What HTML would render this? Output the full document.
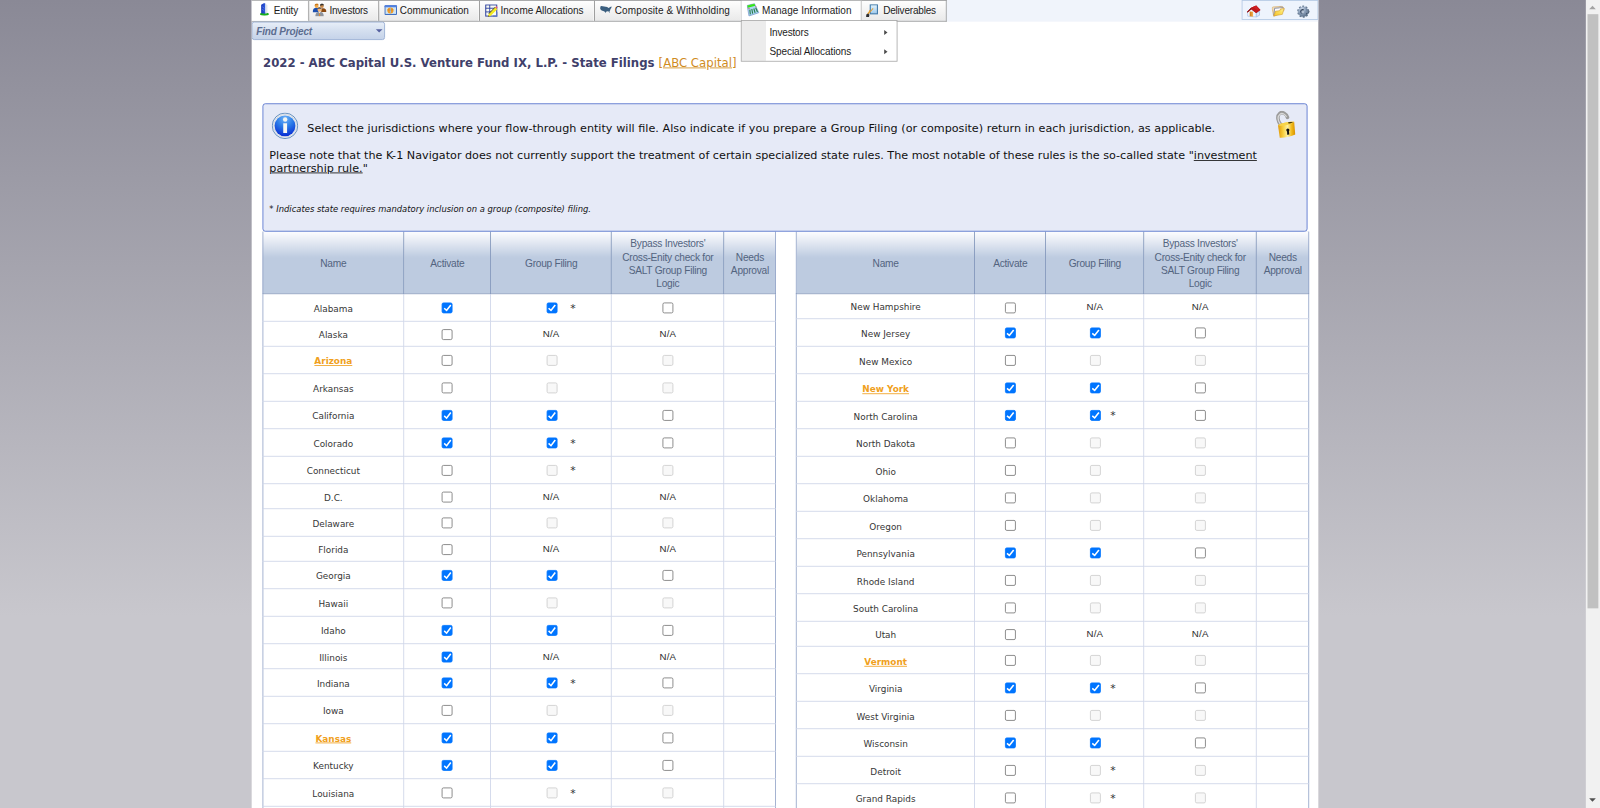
<!DOCTYPE html>
<html lang="en"><head><meta charset="utf-8"><title>State Filings</title>
<style>
html,body{margin:0;padding:0}
body{width:1600px;height:808px;overflow:hidden;position:relative;background:linear-gradient(#8a8996 0,#c8c7cd 616px,#c8c7cd 100%);font-family:"DejaVu Sans","Liberation Sans",sans-serif}
#scale{position:absolute;left:0;top:0;width:1920px;height:970px;transform:scale(.833333);transform-origin:0 0}
#page{position:absolute;left:302px;top:0;width:1280px;height:970px;background:#fff;overflow:hidden}
#strip{position:absolute;left:0;top:0;width:1280px;height:26px;background:#f0f4fb}
#menu{position:absolute;left:0;top:0;width:834px;height:26px;margin:0;padding:0;list-style:none;box-sizing:border-box;border:1px solid #9b9b9b;border-left:0;background:linear-gradient(#fefefe,#e9e9e9);font:12px "Liberation Sans",sans-serif;color:#1c1c1c}
#menu .mi{position:absolute;top:0;height:24px;box-sizing:border-box;border-right:1px solid #8e8e8e;box-shadow:inset -1px 0 0 #fafafa}
#menu .mi.first,#menu .mi.open{background:#fff}
#menu .mi.open,#menu .mi.preopen{border-right-color:#bcbcbc}
#menu .mi:last-child{border-right:0;box-shadow:none}
#menu .ico{position:absolute}
#menu .ico svg{display:block}
#menu .mt{position:absolute;top:0;line-height:24px;white-space:nowrap}
#sub{position:absolute;left:587.4px;top:24.3px;width:187.6px;height:49.4px;box-sizing:border-box;border:1px solid #a8a8a8;background:linear-gradient(90deg,#ececec 0,#ececec 29px,#fff 29px);margin:0;padding:1.7px 0 0;list-style:none;font:12px "Liberation Sans",sans-serif;color:#1c1c1c;z-index:5}
#sub li{position:relative;top:1px;height:23px;line-height:23px;padding-left:33px;white-space:nowrap}
#sub li i{position:absolute;right:11px;top:7.6px;width:0;height:0;border-left:4px solid #4a4a4a;border-top:3.8px solid transparent;border-bottom:3.8px solid transparent}
#tools{position:absolute;left:1187.5px;top:0;width:92.5px;height:23.6px;box-sizing:border-box;border:1px solid #b4c9e4;background:#eef4fd}
#tools span{position:absolute;top:4px}
#tools svg{display:block}
#find{position:absolute;left:0;top:26.3px;width:159.8px;height:21.3px;box-sizing:border-box;border:1px solid #8ea6cf;border-radius:3px;background:linear-gradient(#e7eef8,#d4dfef 50%,#c5d3e9);font:italic bold 12px "Liberation Sans",sans-serif;color:#5d6d90}
#find b{position:absolute;left:4.6px;top:2px;line-height:19px;letter-spacing:-.22px;white-space:nowrap}
#find i{position:absolute;left:147.6px;top:7.8px;width:0;height:0;border-top:4.6px solid #5560a0;border-left:4.2px solid transparent;border-right:4.2px solid transparent}
h1{position:absolute;left:13.6px;top:65.3px;margin:0;font:bold 14.06px "DejaVu Sans",sans-serif;color:#40406a;white-space:nowrap;line-height:20px}
h1 a{font-weight:normal;color:#d08c1e;text-decoration:underline}
#info{position:absolute;left:12.8px;top:123.6px;width:1254px;height:154.9px;z-index:2;box-sizing:border-box;border:1.3px solid #4f6ecb;border-radius:3.4px;background:#e6eaf7;font:13.42px "DejaVu Sans",sans-serif;color:#111}
#info .ic{position:absolute;left:10.4px;top:10.2px}
#info .lk{position:absolute;left:1214.4px;top:8.8px}
#info p{position:absolute;margin:0;white-space:nowrap;line-height:16px}
#info .p1{left:53px;top:21.8px;word-spacing:.19px}
#info .p2{left:7.4px;top:54px}
#info .p3{left:7.4px;top:69.6px}
#info .p4{left:7.4px;top:119.8px;font:italic 10.08px "DejaVu Sans",sans-serif;line-height:14px}
#info u{text-decoration:underline}
table.grid{position:absolute;top:278.1px;border-collapse:collapse;table-layout:fixed;font:10.67px "DejaVu Sans",sans-serif;color:#363636}
table.grid th{height:74px;padding:3.4px 0 0;box-sizing:border-box;border:1px solid #8095ba;border-top:0;background:linear-gradient(#fdfdff 0,#bdcbe0 42%,#bdcbe0 100%);font:normal 12.2px/16px "Liberation Sans",sans-serif;letter-spacing:-.3px;color:#53647f;text-align:center;vertical-align:middle}
table.grid td{padding:0;border:1px solid #cdd4e8;text-align:center;vertical-align:middle}
table.grid td:first-child,table.grid th:first-child{border-left-color:#93a4c8}
table.grid td:last-child,table.grid th:last-child{border-right-color:#93a4c8}
table.grid input{-webkit-appearance:none;appearance:none;display:inline-block;margin:0;width:13px;height:13px;box-sizing:border-box;border:1px solid #767676;border-radius:2.2px;background:#fff;vertical-align:middle;position:relative;top:.4px}
table.grid input:checked{background:#0075ff;border-color:#0075ff}
table.grid input:checked::after{content:"";position:absolute;left:-1px;top:-1px;width:13px;height:13px;background:#fff;clip-path:polygon(1.98px 7.62px,5.63px 10.77px,11.35px 3.49px,9.85px 2.31px,5.37px 8.03px,3.22px 6.18px)}
table.grid input:disabled{border-color:#cdcdcd;background:#f8f8f8}
table.grid .gw{position:relative;display:inline-block}
table.grid .gw input{left:.8px}
table.grid .star{position:absolute;left:29.5px;top:.8px;font-size:13px;line-height:13px;color:#333}
table.grid .na{font:11.6px "Liberation Sans",sans-serif;color:#2a2a2a;position:relative;top:.7px;letter-spacing:.25px}
table.grid td:first-child{padding-top:2px}
table.grid tr.sh td:first-child{padding-top:4px}
table.rt td:first-child{padding-top:5px}
table.rt tr.sh td:first-child{padding-top:4px}
table.rt tbody tr:first-child td:first-child{padding-top:2.4px}
table.rt .star{left:24.9px}
table.rt tbody tr:first-child input{top:1.6px}
a.sl{color:#f0a020;font-weight:bold;text-decoration:underline}
#sb{position:absolute;left:1903px;top:0;width:17px;height:970px;background:#f1f1f1}
#sb .th{position:absolute;left:1.6px;top:17px;width:13.4px;height:712.5px;background:#c1c1c1}
#sb .up{position:absolute;left:4px;top:6.5px;width:0;height:0;border-bottom:4px solid #a3a3a3;border-left:4px solid transparent;border-right:4px solid transparent}
#sb .dn{position:absolute;left:4px;bottom:7.7px;width:0;height:0;border-top:4px solid #505050;border-left:4px solid transparent;border-right:4px solid transparent}

</style></head>
<body>
<div id="scale">
<div id="page">
<div id="strip"></div>
<ul id="menu">
<li class="mi first" style="left:0.0px;width:68.7px"><span class="ico" style="left:9.0px;top:2.0px"><svg width="16" height="16" viewBox="0 0 16 16"><defs><linearGradient id="ge" x1="0" y1="0" x2="1" y2="0"><stop offset="0" stop-color="#1636b8"/><stop offset="1" stop-color="#2f5ce0"/></linearGradient></defs><ellipse cx="6.3" cy="13.9" rx="5.4" ry="1.9" fill="#19b01c"/><path d="M2.4 13V2.6L6 .6l1.5 1V13.4z" fill="url(#ge)"/><path d="M7.5 1.6L9.9 3v9.6l-2.4.8z" fill="#dde3ee"/><path d="M3.6 5l2.6 2M3.6 8l2.6 2" stroke="#6f8ff0" stroke-width=".7"/></svg></span><span class="mt" style="left:26.6px;letter-spacing:-0.167px">Entity</span></li>
<li class="mi" style="left:68.7px;width:83.9px"><span class="ico" style="left:4.8px;top:3.3px"><svg width="17" height="16" viewBox="0 0 17 16"><path d="M.2 10.6c0-3.4 1.6-5.2 4.6-5.2 1.600 0 2.500.8 2.500 2.200v3z" fill="#1c4fb0"/><path d="M16.700 10.400c0-3-1.400-4.400-3.800-4.400-1.500 0-2.500.8-2.500 2v2.400z" fill="#8a4a12"/><circle cx="4.900" cy="3.200" r="2.300" fill="#f0a848"/><path d="M2.600 3c0-1.900 1.100-2.800 2.400-2.800s2.300.8 2.300 2.200c-1.300-.5-3-.4-4.700.6z" fill="#c8781c"/><circle cx="11.300" cy="3.300" r="2.300" fill="#c88848"/><path d="M9 2.800C9 1 10.100.2 11.400.2s2.300.9 2.300 2.400c-1.500-.6-3.100-.5-4.700.2z" fill="#33302c"/><path d="M3.400 15.400c0-3.600 1.800-5.200 5.100-5.200s5 1.600 5 5.200z" fill="#8d949e"/><path d="M7.300 10.300h2.400L8.500 12z" fill="#f4f4f4"/><path d="M8.500 11l.9 3.800-.9.800-.9-.8z" fill="#e08830"/><circle cx="8.500" cy="7.600" r="2.500" fill="#f4b87c"/><path d="M6 7.200c0-1.800 1.100-2.500 2.500-2.500s2.500.8 2.500 2.500c-1.600-.8-3.400-.8-5 0z" fill="#5a5048"/></svg></span><span class="mt" style="left:24.8px;letter-spacing:-0.322px">Investors</span></li>
<li class="mi" style="left:152.6px;width:121.4px"><span class="ico" style="left:6.0px;top:4.8px"><svg width="16" height="13" viewBox="0 0 16 13"><rect x=".4" y=".4" width="15" height="11.600" rx="1.200" fill="#3f6fc0"/><rect x=".4" y=".4" width="15" height="2.600" rx="1.200" fill="#4f7fe0"/><rect x="1.600" y="2.700" width="12.600" height="8" fill="#cfe4f2"/><ellipse cx="7.500" cy="6.600" rx="3.700" ry="3.600" fill="#f09a28"/><path d="M7.500 3c-1 1.500-1 5.700 0 7.200 1-1.500 1-5.700 0-7.200z" fill="#8fc0e8"/><path d="M4 5.500c2 .8 5 .8 7 0" stroke="#c87818" stroke-width=".6" fill="none"/></svg></span><span class="mt" style="left:25.2px;letter-spacing:-0.038px">Communication</span></li>
<li class="mi" style="left:274.0px;width:138.0px"><span class="ico" style="left:5.8px;top:3.5px"><svg width="16" height="16" viewBox="0 0 16 16"><rect x=".9" y=".9" width="13.200" height="13.400" fill="#f8fbf4" stroke="#2c3f9e" stroke-width="1.200"/><path d="M.9 4.900h13.200M.9 9.300h9M5.700.9v13.400" stroke="#2c3f9e" stroke-width="1.100"/><path d="M9.600 14.300h4.500v-5" stroke="#5f78c8" stroke-width="1.400" fill="none"/><path d="M12.200 3.600l2.600 2.400-7.600 7.700-3.600 1.600 1-3.900z" fill="#f4ea20"/><path d="M12.200 3.600l-7.600 7.800" stroke="#4a4420" stroke-width="1.100"/><path d="M12.200 3.600l1-.9c.8-.6 2.400.9 1.700 1.700l-.9 1z" fill="#e86078"/><path d="M3.600 15.300l.5-1.900 1.300 1.200z" fill="#554a30"/></svg></span><span class="mt" style="left:24.7px;letter-spacing:-0.028px">Income Allocations</span></li>
<li class="mi preopen" style="left:412.0px;width:175.6px"><span class="ico" style="left:6.0px;top:6.2px"><svg width="15" height="10" viewBox="0 0 15 10"><path d="M.5.800L1.500.3l7.200 1.200L10 2.600l1.300-.5 1.600-1 1-.3-.3 1.700-1 1.300-.5 1.900-.8 1 .6 1.600h-.6l-.8-1.600-1.800-.3-1.300.6-.9 1.700-.8-1.700-1-.6-1.900-.4-1.700-.9L.2 3.100z" fill="#3b5f7f"/></svg></span><span class="mt" style="left:23.7px;letter-spacing:0.157px">Composite &amp; Withholding</span></li>
<li class="mi open" style="left:587.6px;width:144.4px"><span class="ico" style="left:6.0px;top:2.8px"><svg width="16" height="16" viewBox="0 0 16 16"><path d="M.6 2.600L9.300.3l5.300 10.900-11.800 4z" fill="#a9d8f0" stroke="#6f8fc8" stroke-width=".8"/><path d="M1 2.600L9.300.6l1 2.400-9 2.300z" fill="#2fe010"/><path d="M1 2.800L9.300.7l.5 1-8.700 2.200z" fill="#58f030" opacity=".6"/><path d="M3.800 7.500l.6 5.700M6.200 6.800l1 5.500M8.600 6.200l1.500 5.200M10.800 5.400l2.200 5" stroke="#2a7a48" stroke-width="1.300"/><path d="M2.200 6.200l1.200-.3" stroke="#e04848" stroke-width="1.300"/><path d="M10.600 4.200l.9-.3" stroke="#e04848" stroke-width="1.200"/></svg></span><span class="mt" style="left:24.9px;letter-spacing:0.033px">Manage Information</span></li>
<li class="mi" style="left:732.0px;width:102.0px"><span class="ico" style="left:5.4px;top:3.6px"><svg width="15" height="16" viewBox="0 0 15 16"><defs><linearGradient id="gd" x1="0" y1="0" x2="0" y2="1"><stop offset="0" stop-color="#e4f4fd"/><stop offset="1" stop-color="#9cc8ec"/></linearGradient></defs><rect x="5.300" y=".7" width="8.600" height="10.900" fill="url(#gd)" stroke="#3f78a8" stroke-width="1.300"/><path d="M9.200 5.500L4.600 10.600 3 12.400l-1.400-1.300 1.700-1.800 1-2.600 1 1.400L8.300 4.600z" fill="#e8a030"/><path d="M.5 12.300l2.200-1.200 1.600 1.500-.5 2.800H.4z" fill="#2c2c30"/></svg></span><span class="mt" style="left:25.8px;letter-spacing:-0.233px">Deliverables</span></li>
</ul>
<ul id="sub"><li style="letter-spacing:-.21px">Investors<i></i></li><li style="letter-spacing:-.11px">Special Allocations<i></i></li></ul>
<div id="tools"><span style="left:4.8px;top:4.6px"><svg width="19" height="16" viewBox="0 0 19 16"><defs><linearGradient id="gh" x1="0" y1="0" x2="1" y2="0"><stop offset="0" stop-color="#d07810"/><stop offset="1" stop-color="#f4b458"/></linearGradient></defs><path d="M12.400 9.600l4-2.100v4.800l-4 2.100z" fill="#dbe8fb" stroke="#8cb0e0" stroke-width=".7"/><path d="M2.200 8.600l4.300-3.500 5.900 4.500v4.800L2.200 13.400z" fill="#f2f6fe" stroke="#9cbce8" stroke-width=".7"/><path d="M4.650 7.750l4.050.25v6.200l-4.050-.6z" fill="url(#gh)"/><path d="M1.300 8.300L6.300 3.200 12.400.5l5.100 5.400-5.100 3.700L6.500 5.100 2.200 8.900z" fill="#b41418"/><path d="M6.300 3.200L12.400.5l5.100 5.400-5.100 3.700-5.900-4.500z" fill="#c0181c"/><path d="M1.300 8.300L6.300 3.200l.5 1.700-4.600 4z" fill="#8a1014"/><path d="M9 2.400l3.400-1.500 3.600 3.900-2 1.400z" fill="#d42428" opacity=".7"/></svg></span><span style="left:35px;top:6.2px"><svg width="17" height="14" viewBox="0 0 17 14"><defs><linearGradient id="gf" x1="0" y1="1" x2="1" y2="0"><stop offset="0" stop-color="#f4c028"/><stop offset=".6" stop-color="#fbe060"/><stop offset="1" stop-color="#fdf4a8"/></linearGradient></defs><path d="M.3 2.300l1.400-1 10.700-.8 2.700 2.400-.3 3L2.500 12.600z" fill="#f0dcb8" stroke="#d8a860" stroke-width=".7"/><path d="M9.500 1.400l4.500.5" stroke="#78809c" stroke-width="1"/><path d="M3.700 3.200l6.200-.5-.4 2.800-5.700 1z" fill="#fbfbfd"/><path d="M9.600 2.400l-6 .5-1.100 8.300" fill="none" stroke="#848ca8" stroke-width="1.100"/><path d="M4.650 6.400l4.850-.5L10.800 4l4-.8-1.900 7L2.500 12.200z" fill="url(#gf)" stroke="#c8901c" stroke-width=".6"/></svg></span><span style="left:65.6px;top:4.6px"><svg width="17" height="17" viewBox="0 0 17 17"><defs><radialGradient id="gg" cx=".36" cy=".26" r=".85"><stop offset="0" stop-color="#ccd8e8"/><stop offset=".45" stop-color="#8a9eb8"/><stop offset="1" stop-color="#52677f"/></radialGradient></defs><circle cx="7.900" cy="8" r="6.300" fill="none" stroke="#62778f" stroke-width="1.900" stroke-dasharray="2.300 1.660"/><circle cx="7.900" cy="8" r="6.200" fill="url(#gg)"/><path d="M14 7.300l1.700.6-1.500 1.300z" fill="#2c3c50"/><circle cx="12" cy="10.500" r=".8" fill="#3c4e66"/><circle cx="12.300" cy="5.800" r=".7" fill="#5a6e88"/><ellipse cx="6.500" cy="7.800" rx="2.300" ry="2.700" fill="#34465e"/><ellipse cx="7.300" cy="8.100" rx="1.700" ry="2.200" fill="#b4c2d4"/><path d="M6 5.600c1-.9 2-.9 2.700-.3-1 .1-1.800.7-2.300 1.600z" fill="#2c3c52"/></svg></span></div>
<div id="find"><b>Find Project</b><i></i></div>
<h1>2022 - ABC Capital U.S. Venture Fund IX, L.P. - State Filings <a href="#">[ABC Capital]</a></h1>
<div id="info">
<span class="ic"><svg width="32" height="32" viewBox="0 0 32 32"><defs><radialGradient id="gi" cx=".5" cy=".15" r=".9"><stop offset="0" stop-color="#6fb4f8"/><stop offset=".45" stop-color="#2a7ae8"/><stop offset="1" stop-color="#0424d0"/></radialGradient></defs><circle cx="16" cy="16" r="15.300" fill="#eceff4" stroke="#4f7fb4" stroke-width="1"/><circle cx="16" cy="16" r="13.600" fill="none" stroke="#c8d0dc" stroke-width=".8"/><circle cx="16" cy="16" r="12.500" fill="url(#gi)"/><circle cx="16.200" cy="8.400" r="2.600" fill="#f4f4f0"/><path d="M13.900 12.900h4.600v11.600h-4.600z" fill="#f8f8f4"/></svg></span>
<span class="lk"><svg width="25" height="33" viewBox="0 0 25 33"><defs><linearGradient id="gl" x1="0" y1="0" x2="1" y2="0"><stop offset="0" stop-color="#e09808"/><stop offset=".3" stop-color="#f8d040"/><stop offset=".55" stop-color="#fdf0a0"/><stop offset=".8" stop-color="#f0b818"/><stop offset="1" stop-color="#d89000"/></linearGradient></defs><path d="M7 17C3.600 12.800 1.800 6.400 5.600 3.200c3.200-2.700 8 .4 9.400 4.600" fill="none" stroke="#9c9c9c" stroke-width="4.300" stroke-linecap="round"/><path d="M6.200 15.600C3.400 11.400 2.800 6.600 6 4c2.400-2 5.800-.2 7.600 2.800" fill="none" stroke="#d8d8d8" stroke-width="1.500" stroke-linecap="round"/><path d="M3.600 17.400c4-2.600 12-4.400 19.400-4.200l1.300 15.200c-5 2.600-12 4-18.600 3.800z" fill="url(#gl)"/><path d="M3.600 17.400c4-2.600 12-4.400 19.400-4.200-2 2.400-10 4.800-16.600 4.800z" fill="#f8d448"/><path d="M15.600 13.700c2-.4 4.400-.5 6.200-.4-.8 1-3.400 1.800-5.600 2z" fill="#4a3804"/><circle cx="15.400" cy="23" r="1.900" fill="#101010"/><path d="M14.400 23h2.100l.7 5.400-2.600.4z" fill="#101010"/></svg></span>
<p class="p1">Select the jurisdictions where your flow-through entity will file. Also indicate if you prepare a Group Filing (or composite) return in each jurisdiction, as applicable.</p>
<p class="p2">Please note that the K-1 Navigator does not currently support the treatment of certain specialized state rules. The most notable of these rules is the so-called state "<u>investment</u></p>
<p class="p3"><u>partnership rule.</u>"</p>
<p class="p4">* Indicates state requires mandatory inclusion on a group (composite) filing.</p>
</div>
<table class="grid lt" style="left:12.6px;width:615.8px"><colgroup><col style="width:169.8px"><col style="width:104.0px"><col style="width:145.0px"><col style="width:135.0px"><col style="width:62.0px"></colgroup>
<thead><tr><th>Name</th><th>Activate</th><th>Group Filing</th><th>Bypass Investors'<br>Cross-Enity check for<br>SALT Group Filing<br>Logic</th><th>Needs<br>Approval</th></tr></thead><tbody>
<tr class="sh" style="height:33.50px"><td>Alabama</td><td><input type="checkbox" checked></td><td><span class="gw"><input type="checkbox" checked><span class="star">*</span></span></td><td><input type="checkbox"></td><td></td></tr>
<tr class="sh" style="height:30.00px"><td>Alaska</td><td><input type="checkbox"></td><td><span class="gw"><span class="na">N/A</span></span></td><td><span class="na">N/A</span></td><td></td></tr>
<tr style="height:33.00px"><td><a class="sl" href="#">Arizona</a></td><td><input type="checkbox"></td><td><span class="gw"><input type="checkbox" disabled></span></td><td><input type="checkbox" disabled></td><td></td></tr>
<tr style="height:33.00px"><td>Arkansas</td><td><input type="checkbox"></td><td><span class="gw"><input type="checkbox" disabled></span></td><td><input type="checkbox" disabled></td><td></td></tr>
<tr style="height:33.00px"><td>California</td><td><input type="checkbox" checked></td><td><span class="gw"><input type="checkbox" checked></span></td><td><input type="checkbox"></td><td></td></tr>
<tr style="height:33.00px"><td>Colorado</td><td><input type="checkbox" checked></td><td><span class="gw"><input type="checkbox" checked><span class="star">*</span></span></td><td><input type="checkbox"></td><td></td></tr>
<tr style="height:33.00px"><td>Connecticut</td><td><input type="checkbox"></td><td><span class="gw"><input type="checkbox" disabled><span class="star">*</span></span></td><td><input type="checkbox" disabled></td><td></td></tr>
<tr class="sh" style="height:30.00px"><td>D.C.</td><td><input type="checkbox"></td><td><span class="gw"><span class="na">N/A</span></span></td><td><span class="na">N/A</span></td><td></td></tr>
<tr style="height:33.00px"><td>Delaware</td><td><input type="checkbox"></td><td><span class="gw"><input type="checkbox" disabled></span></td><td><input type="checkbox" disabled></td><td></td></tr>
<tr class="sh" style="height:30.00px"><td>Florida</td><td><input type="checkbox"></td><td><span class="gw"><span class="na">N/A</span></span></td><td><span class="na">N/A</span></td><td></td></tr>
<tr style="height:33.00px"><td>Georgia</td><td><input type="checkbox" checked></td><td><span class="gw"><input type="checkbox" checked></span></td><td><input type="checkbox"></td><td></td></tr>
<tr style="height:33.00px"><td>Hawaii</td><td><input type="checkbox"></td><td><span class="gw"><input type="checkbox" disabled></span></td><td><input type="checkbox" disabled></td><td></td></tr>
<tr style="height:33.00px"><td>Idaho</td><td><input type="checkbox" checked></td><td><span class="gw"><input type="checkbox" checked></span></td><td><input type="checkbox"></td><td></td></tr>
<tr class="sh" style="height:30.00px"><td>Illinois</td><td><input type="checkbox" checked></td><td><span class="gw"><span class="na">N/A</span></span></td><td><span class="na">N/A</span></td><td></td></tr>
<tr style="height:33.00px"><td>Indiana</td><td><input type="checkbox" checked></td><td><span class="gw"><input type="checkbox" checked><span class="star">*</span></span></td><td><input type="checkbox"></td><td></td></tr>
<tr style="height:33.00px"><td>Iowa</td><td><input type="checkbox"></td><td><span class="gw"><input type="checkbox" disabled></span></td><td><input type="checkbox" disabled></td><td></td></tr>
<tr style="height:33.00px"><td><a class="sl" href="#">Kansas</a></td><td><input type="checkbox" checked></td><td><span class="gw"><input type="checkbox" checked></span></td><td><input type="checkbox"></td><td></td></tr>
<tr style="height:33.00px"><td>Kentucky</td><td><input type="checkbox" checked></td><td><span class="gw"><input type="checkbox" checked></span></td><td><input type="checkbox"></td><td></td></tr>
<tr style="height:33.00px"><td>Louisiana</td><td><input type="checkbox"></td><td><span class="gw"><input type="checkbox" disabled><span class="star">*</span></span></td><td><input type="checkbox" disabled></td><td></td></tr>
<tr style="height:33.00px"><td>Maine</td><td><input type="checkbox"></td><td><span class="gw"><input type="checkbox" disabled></span></td><td><input type="checkbox" disabled></td><td></td></tr>
</tbody></table>
<table class="grid rt" style="left:653.3px;width:615.0px"><colgroup><col style="width:214.0px"><col style="width:85.0px"><col style="width:118.0px"><col style="width:135.0px"><col style="width:63.0px"></colgroup>
<thead><tr><th>Name</th><th>Activate</th><th>Group Filing</th><th>Bypass Investors'<br>Cross-Enity check for<br>SALT Group Filing<br>Logic</th><th>Needs<br>Approval</th></tr></thead><tbody>
<tr class="sh" style="height:30.30px"><td>New Hampshire</td><td><input type="checkbox"></td><td><span class="gw"><span class="na">N/A</span></span></td><td><span class="na">N/A</span></td><td></td></tr>
<tr style="height:33.00px"><td>New Jersey</td><td><input type="checkbox" checked></td><td><span class="gw"><input type="checkbox" checked></span></td><td><input type="checkbox"></td><td></td></tr>
<tr style="height:33.00px"><td>New Mexico</td><td><input type="checkbox"></td><td><span class="gw"><input type="checkbox" disabled></span></td><td><input type="checkbox" disabled></td><td></td></tr>
<tr style="height:33.00px"><td><a class="sl" href="#">New York</a></td><td><input type="checkbox" checked></td><td><span class="gw"><input type="checkbox" checked></span></td><td><input type="checkbox"></td><td></td></tr>
<tr style="height:33.00px"><td>North Carolina</td><td><input type="checkbox" checked></td><td><span class="gw"><input type="checkbox" checked><span class="star">*</span></span></td><td><input type="checkbox"></td><td></td></tr>
<tr style="height:33.00px"><td>North Dakota</td><td><input type="checkbox"></td><td><span class="gw"><input type="checkbox" disabled></span></td><td><input type="checkbox" disabled></td><td></td></tr>
<tr style="height:33.00px"><td>Ohio</td><td><input type="checkbox"></td><td><span class="gw"><input type="checkbox" disabled></span></td><td><input type="checkbox" disabled></td><td></td></tr>
<tr style="height:33.00px"><td>Oklahoma</td><td><input type="checkbox"></td><td><span class="gw"><input type="checkbox" disabled></span></td><td><input type="checkbox" disabled></td><td></td></tr>
<tr style="height:33.00px"><td>Oregon</td><td><input type="checkbox"></td><td><span class="gw"><input type="checkbox" disabled></span></td><td><input type="checkbox" disabled></td><td></td></tr>
<tr style="height:33.00px"><td>Pennsylvania</td><td><input type="checkbox" checked></td><td><span class="gw"><input type="checkbox" checked></span></td><td><input type="checkbox"></td><td></td></tr>
<tr style="height:33.00px"><td>Rhode Island</td><td><input type="checkbox"></td><td><span class="gw"><input type="checkbox" disabled></span></td><td><input type="checkbox" disabled></td><td></td></tr>
<tr style="height:33.00px"><td>South Carolina</td><td><input type="checkbox"></td><td><span class="gw"><input type="checkbox" disabled></span></td><td><input type="checkbox" disabled></td><td></td></tr>
<tr class="sh" style="height:30.00px"><td>Utah</td><td><input type="checkbox"></td><td><span class="gw"><span class="na">N/A</span></span></td><td><span class="na">N/A</span></td><td></td></tr>
<tr style="height:33.00px"><td><a class="sl" href="#">Vermont</a></td><td><input type="checkbox"></td><td><span class="gw"><input type="checkbox" disabled></span></td><td><input type="checkbox" disabled></td><td></td></tr>
<tr style="height:33.00px"><td>Virginia</td><td><input type="checkbox" checked></td><td><span class="gw"><input type="checkbox" checked><span class="star">*</span></span></td><td><input type="checkbox"></td><td></td></tr>
<tr style="height:33.00px"><td>West Virginia</td><td><input type="checkbox"></td><td><span class="gw"><input type="checkbox" disabled></span></td><td><input type="checkbox" disabled></td><td></td></tr>
<tr style="height:33.00px"><td>Wisconsin</td><td><input type="checkbox" checked></td><td><span class="gw"><input type="checkbox" checked></span></td><td><input type="checkbox"></td><td></td></tr>
<tr style="height:33.00px"><td>Detroit</td><td><input type="checkbox"></td><td><span class="gw"><input type="checkbox" disabled><span class="star">*</span></span></td><td><input type="checkbox" disabled></td><td></td></tr>
<tr style="height:33.00px"><td>Grand Rapids</td><td><input type="checkbox"></td><td><span class="gw"><input type="checkbox" disabled><span class="star">*</span></span></td><td><input type="checkbox" disabled></td><td></td></tr>
<tr style="height:33.00px"><td>Kansas City</td><td><input type="checkbox"></td><td><span class="gw"><input type="checkbox" disabled><span class="star">*</span></span></td><td><input type="checkbox" disabled></td><td></td></tr>
</tbody></table>
</div>
<div id="sb"><div class="up"></div><div class="th"></div><div class="dn"></div></div>
</div>

</body></html>
